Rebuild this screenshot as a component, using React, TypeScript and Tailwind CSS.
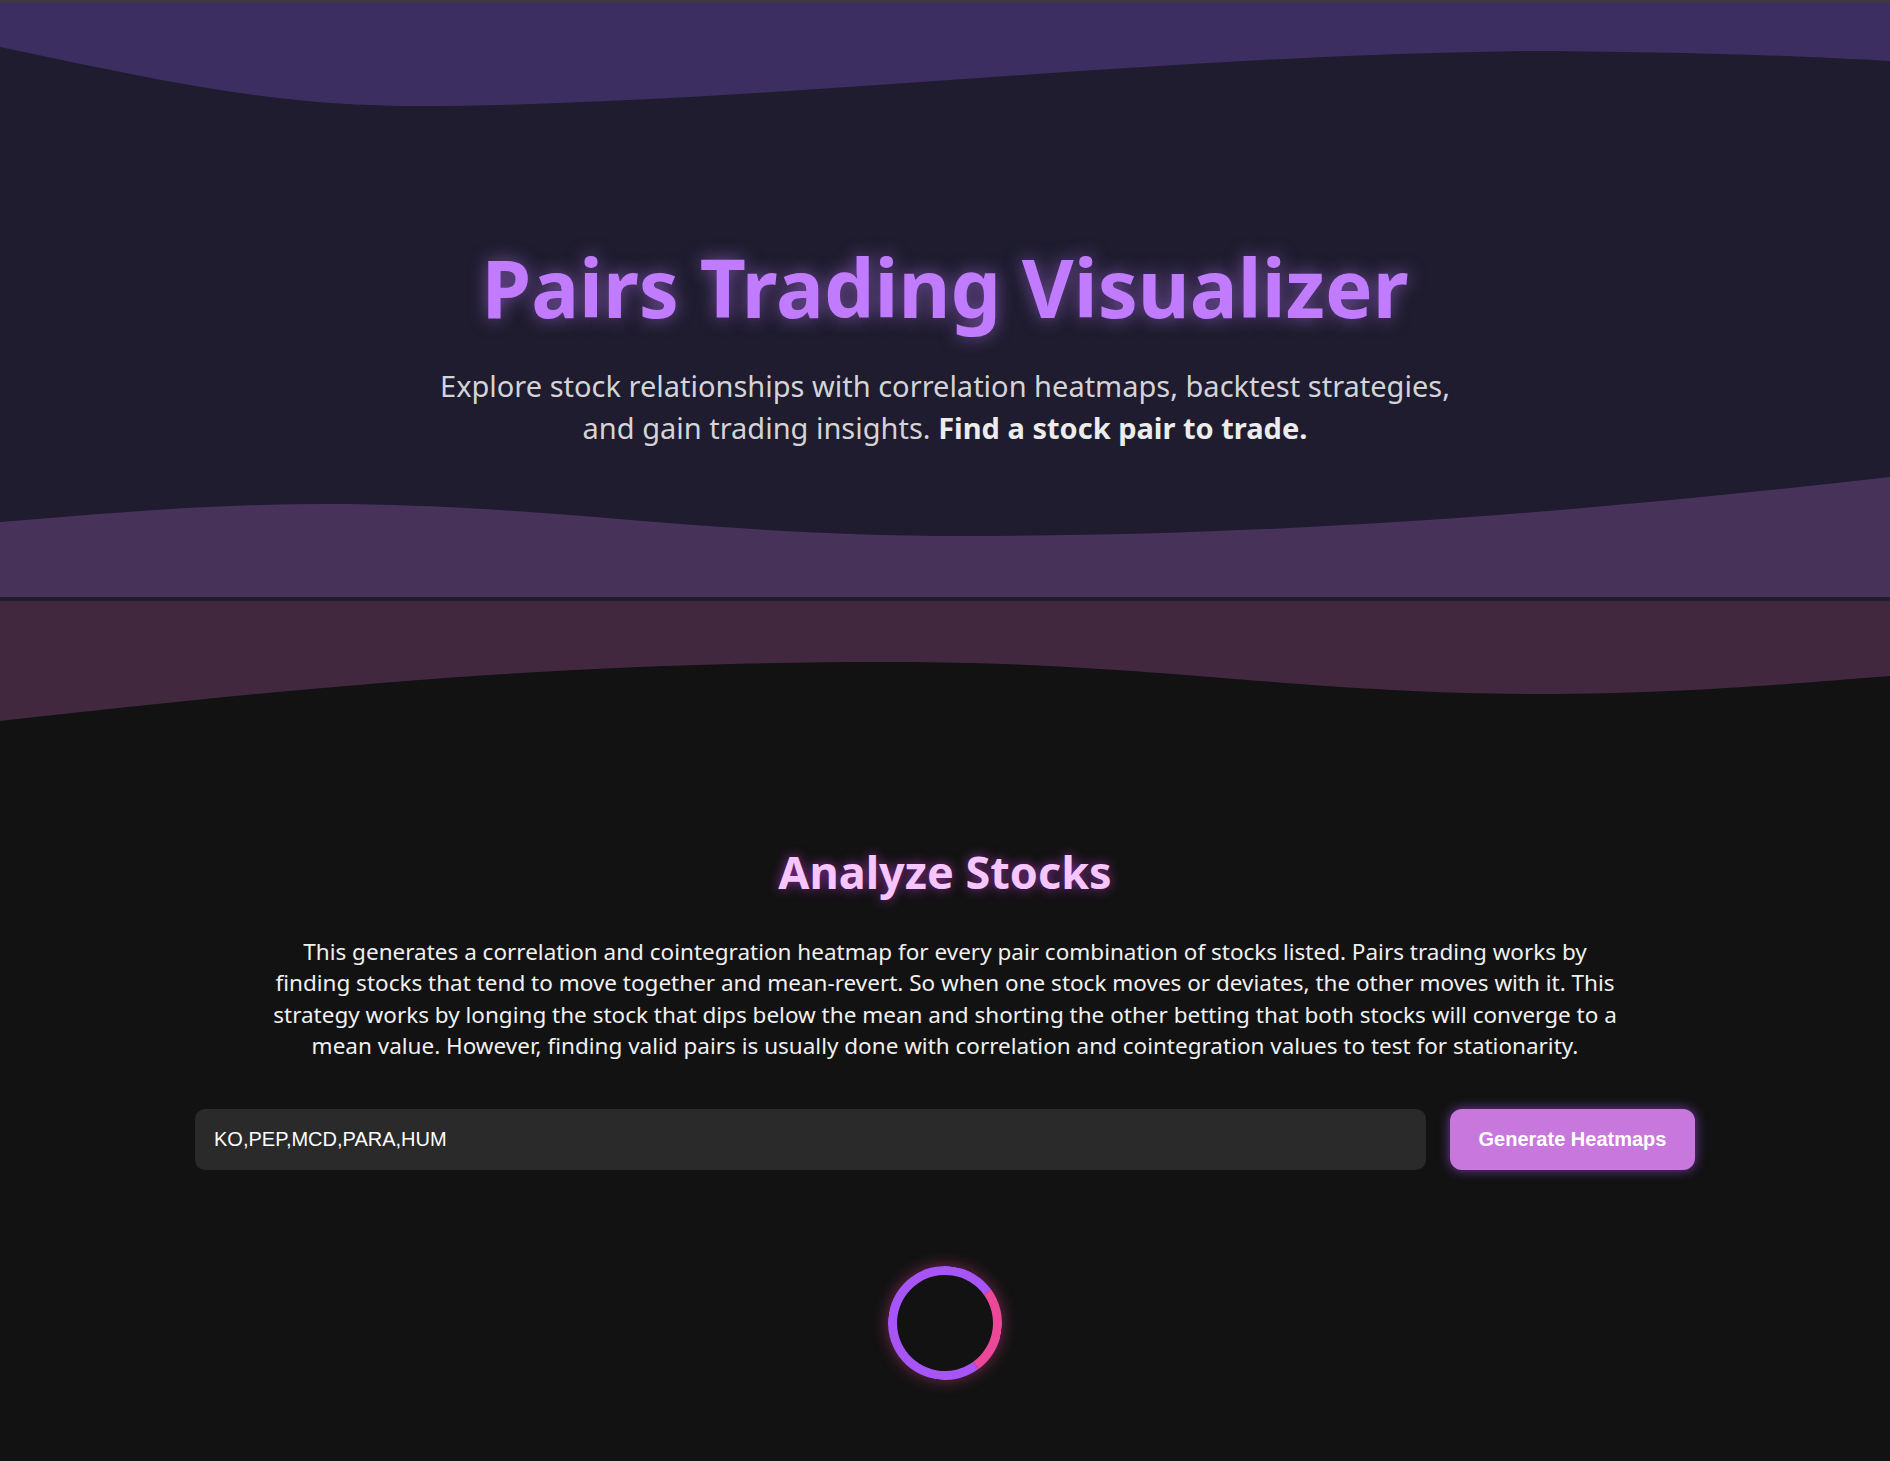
import React from "react";

export default function App() {
  return (
    <div className="min-h-screen w-full bg-[#121212] font-['Noto_Sans',sans-serif]">
      <div className="h-[2px] w-full bg-[#3c3b39]" />
      {/* Hero */}
      <section className="flex flex-col bg-[#1e1c2e] pb-[4px]">
        <svg
          className="block h-[108px] w-full"
          viewBox="0 2 1890 108"
          preserveAspectRatio="none"
        >
          <path
            d="M0,47 C180,85 280,106 420,106 C750,105 1150,55 1530,51 C1700,52 1800,56 1890,61 L1890,0 L0,0 Z"
            fill="#3d2e62"
          />
        </svg>
        <div className="flex flex-col items-center pt-[129px] pb-[28px]">
          <h1 className="text-[80px] font-bold leading-[96px] text-[#c07bff] [text-shadow:0_0_18px_rgba(192,123,255,0.55)]">
            Pairs Trading Visualizer
          </h1>
          <p className="mt-[30px] max-w-[1200px] text-center text-[29px] leading-[42px] text-[#d4d4d8]">
            Explore stock relationships with correlation heatmaps, backtest strategies,
            <br />
            and gain trading insights.{" "}
            <span className="font-bold text-[#ececec]">Find a stock pair to trade.</span>
          </p>
        </div>
        <svg
          className="block h-[120px] w-full"
          viewBox="0 477 1890 120"
          preserveAspectRatio="none"
        >
          <path
            d="M0,522 C120,512 220,504 325,504 C550,504 700,536 964,536 C1300,536 1600,510 1890,477 L1890,597 L0,597 Z"
            fill="#47325a"
          />
        </svg>
      </section>

      {/* Analyze section */}
      <section className="flex flex-col bg-[#121212]">
        <svg
          className="block h-[120px] w-full"
          viewBox="0 603 1890 120"
          preserveAspectRatio="none"
        >
          <path
            d="M0,723 C300,690 550,664 892,664 C1150,664 1300,696 1543,696 C1680,696 1800,685 1890,678 L1890,603 L0,603 Z"
            fill="#41283f"
          />
        </svg>
        <div className="flex flex-col items-center pt-[123px] pb-[80px]">
          <h2 className="text-[45px] font-bold leading-[56px] text-[#f7c6ff] [text-shadow:0_0_12px_rgba(217,70,239,0.6)]">
            Analyze Stocks
          </h2>
          <p className="mt-[36px] max-w-[1500px] text-center text-[22.5px] leading-[31.4px] text-[#f0f0f0]">
            This generates a correlation and cointegration heatmap for every pair combination of stocks listed. Pairs trading works by
            <br />
            finding stocks that tend to move together and mean-revert. So when one stock moves or deviates, the other moves with it. This
            <br />
            strategy works by longing the stock that dips below the mean and shorting the other betting that both stocks will converge to a
            <br />
            mean value. However, finding valid pairs is usually done with correlation and cointegration values to test for stationarity.
          </p>
          <div className="mt-[47px] flex w-[1500px] items-center gap-[24px]">
            <input
              readOnly
              defaultValue="KO,PEP,MCD,PARA,HUM"
              className="h-[61px] flex-1 rounded-[10px] bg-[#2a2a2a] px-[19px] font-['Liberation_Sans',Arial,sans-serif] text-[20px] text-white outline-none"
            />
            <button className="h-[61px] w-[245px] rounded-[12px] bg-[#c878dc] font-['Liberation_Sans',Arial,sans-serif] text-[20px] font-bold text-white shadow-[0_0_12px_rgba(168,85,247,0.65)]">
              Generate Heatmaps
            </button>
          </div>
          <div className="mt-[96px] h-[114px] w-[114px] rotate-[9deg] rounded-full border-[9px] border-[#a855f7] border-r-[#ec4899] shadow-[0_0_16px_rgba(236,72,153,0.45)]" />
        </div>
      </section>
    </div>
  );
}
